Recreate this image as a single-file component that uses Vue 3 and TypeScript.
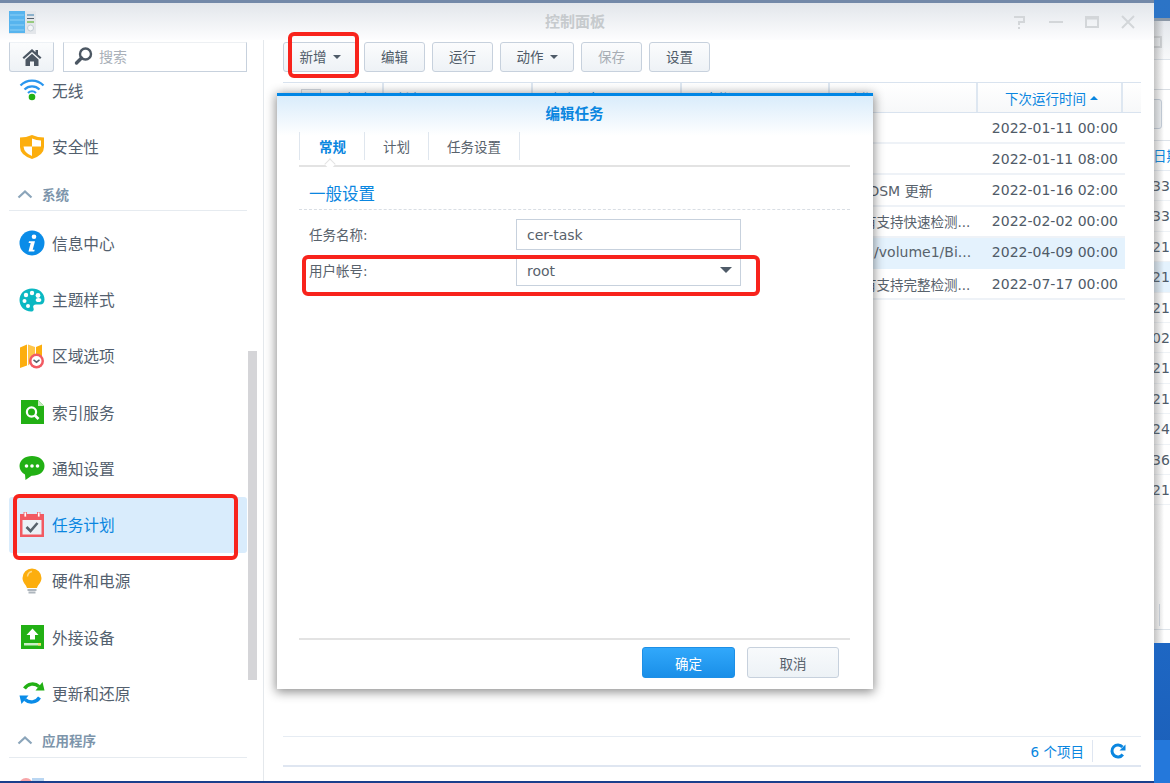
<script setup lang="ts">
interface NavItem { label: string; icon: string; active?: boolean; clipped?: boolean }
interface NavGroup { title?: string; items: NavItem[] }
const groups: NavGroup[] = [
  {
    items: [
      { label: '无线', icon: 'wifi', clipped: true },
      { label: '安全性', icon: 'shield' },
    ],
  },
  {
    title: '系统',
    items: [
      { label: '信息中心', icon: 'info' },
      { label: '主题样式', icon: 'palette' },
      { label: '区域选项', icon: 'region' },
      { label: '索引服务', icon: 'index' },
      { label: '通知设置', icon: 'chat' },
      { label: '任务计划', icon: 'task', active: true },
      { label: '硬件和电源', icon: 'bulb' },
      { label: '外接设备', icon: 'usb' },
      { label: '更新和还原', icon: 'update' },
    ],
  },
  {
    title: '应用程序',
    items: [{ label: '', icon: 'term' }],
  },
]
const tools = [
  { label: '新增', caret: true },
  { label: '编辑' },
  { label: '运行' },
  { label: '动作', caret: true },
  { label: '保存', disabled: true },
  { label: '设置' },
]
const cols = [
  { label: '已启动', w: 101, pad: 18, cb: true },
  { label: '任务', w: 149, pad: 12 },
  { label: '上次运行', w: 149, pad: 16 },
  { label: '用户帐号', w: 148, pad: 9 },
  { label: '动作', w: 148, pad: 16 },
]
const rows = [
  { action: '', next: '2022-01-11 00:00' },
  { action: '', next: '2022-01-11 08:00' },
  { action: '检查 DSM 更新', next: '2022-01-16 02:00' },
  { action: '对所有支持快速检测...', next: '2022-02-02 00:00', tight: true },
  { action: 'bash /volume1/Bi...', next: '2022-04-09 00:00', selected: true },
  { action: '对所有支持完整检测...', next: '2022-07-17 00:00', tight: true },
]
const backRows = ['33', '33', '21', '21', '21', '02', '21', '21', '24', '36', '21']
</script>

<template>
  <div class="desktop">
    <div class="swirl"></div>

    <div class="backwin">
      <div class="back-title"><span class="back-max"></span></div>
      <div class="back-strip"></div>
      <div class="back-tool"><span class="back-btn">.</span></div>
      <div class="back-head">日期</div>
      <div v-for="(r, i) in backRows" :key="i" class="back-row" :class="{ sel: i === 3 }">{{ r }}</div>
      <div class="back-fill"><span class="back-tick"></span></div>
      <div class="back-foot"></div>
    </div>

    <div class="win">
      <header class="titlebar">
        <svg class="appicon" width="28" height="25" viewBox="0 0 28 25">
          <rect x="0" y="0" width="27" height="23" fill="#e3e6ea" />
          <rect x="0" y="0" width="16" height="22" fill="#57b4ee" />
          <path d="M1 4h14M1 9h14M1 14h14M1 19h14" stroke="#8ed0f6" stroke-width="1" />
          <path d="M18 4h7" stroke="#6f9fc0" stroke-width="1.5" />
          <path d="M18 7.500h7" stroke="#54606c" stroke-width="1" />
          <path d="M18 11h7" stroke="#7cc05a" stroke-width="1.5" />
          <circle cx="21.500" cy="17" r="3" fill="#f4f6f8" stroke="#c2ccd4" />
        </svg>
        <span class="wintitle">控制面板</span>
        <div class="winctl">
          <svg width="16" height="16" viewBox="0 0 16 16" fill="none" stroke="#d3d6d9" stroke-width="2"><path d="M2 3h10v5H7v3" /><path d="M7 13v2" /></svg>
          <svg width="16" height="16" viewBox="0 0 16 16" fill="none" stroke="#d3d6d9" stroke-width="2"><path d="M1 8h14" /></svg>
          <svg width="16" height="16" viewBox="0 0 16 16" fill="none" stroke="#d3d6d9" stroke-width="2"><rect x="2" y="3" width="12" height="10" /><path d="M2 4.500h12" /></svg>
          <svg width="16" height="16" viewBox="0 0 16 16" fill="none" stroke="#d3d6d9" stroke-width="2"><path d="M2 2l12 12M14 2L2 14" /></svg>
        </div>
      </header>

      <div class="body">
        <aside class="sidebar">
          <div class="searchrow">
            <button class="homebtn">
              <svg width="20" height="18" viewBox="0 0 20 18"><path d="M10 1L0.500 9.500 2 11l8-7 8 7 1.500-1.500L16 6.500V2h-2.500v2.300z" fill="#4c5763" /><path d="M3.500 11.500L10 5.800l6.500 5.700V18h-4.500v-4.500H8V18H3.500z" fill="#4c5763" /></svg>
            </button>
            <div class="search">
              <svg width="20" height="20" viewBox="0 0 20 20" fill="none"><circle cx="11.500" cy="8" r="5.500" stroke="#4c5763" stroke-width="2.400" /><path d="M7.500 12L2.500 17" stroke="#4c5763" stroke-width="3.400" stroke-linecap="round" /></svg>
              <span>搜索</span>
            </div>
          </div>

          <div class="nav">
            <template v-for="group in groups" :key="group.title ?? 'top'">
              <div v-if="group.title" class="navhead">
                <svg width="16" height="10" viewBox="0 0 16 10" fill="none"><path d="M1.500 8.500L8 2.500l6.500 6" stroke="#8ba5ba" stroke-width="2.200" /></svg>
                <span>{{ group.title }}</span>
              </div>
              <div v-for="it in group.items" :key="it.icon" class="navitem" :class="{ active: it.active, clipped: it.clipped }">
                <svg class="navicon" width="26" height="26" viewBox="0 0 26 26">
                  <g v-if="it.icon === 'wifi'" fill="none">
                    <path d="M1.500 8.500a16 16 0 0 1 23 0" stroke="#2a96ee" stroke-width="2.200" />
                    <path d="M5.500 12.500a10.500 10.500 0 0 1 15 0" stroke="#2a96ee" stroke-width="2.200" />
                    <path d="M9 16a5.500 5.500 0 0 1 8 0" stroke="#2a96ee" stroke-width="2" />
                    <circle cx="13" cy="20" r="3.300" fill="#22b014" />
                  </g>
                  <g v-else-if="it.icon === 'shield'">
                    <path d="M1 3.500Q7 3.500 13 1q6 2.500 12 2.500V13q0 8-12 12Q1 21 1 13z" fill="#fcae0e" />
                    <path d="M13 4.500q4.500 1.800 9 2v6H13z" fill="#fff" />
                    <path d="M13 12.500H4.500q.6 6.500 8.500 9.500z" fill="#fff" />
                  </g>
                  <g v-else-if="it.icon === 'info'">
                    <circle cx="13" cy="13" r="12.500" fill="#0a8ce8" />
                    <circle cx="15" cy="6.800" r="2.300" fill="#fff" />
                    <path d="M10 11.300h6l-2.300 8.400h2l-.5 1.700H9.500l2.200-8.400H9.600z" fill="#fff" />
                  </g>
                  <g v-else-if="it.icon === 'palette'">
                    <path d="M13 1.500C5.800 1.500 0.500 6.500 0.500 13S5.500 24.500 12 24.500c3 0 3-2 2.400-3.500-.8-2 .4-3.500 2.600-3.500h4c3 0 4.500-2 4.500-5C25.500 6 20 1.500 13 1.500z" fill="#0bb8c2" />
                    <circle cx="7" cy="8" r="2.200" fill="#fff" /><circle cx="13" cy="6" r="2.200" fill="#fff" /><circle cx="19" cy="8.500" r="2.400" fill="#fff" /><circle cx="5.500" cy="14" r="2" fill="#fff" /><circle cx="9" cy="19" r="2" fill="#fff" /><ellipse cx="19.500" cy="13" rx="2.800" ry="2" fill="#fff" />
                  </g>
                  <g v-else-if="it.icon === 'region'">
                    <path d="M1 4.500l7-3v21l-7 2.500z" fill="#fcae0e" />
                    <path d="M9 1.500l7 2.500v12l-7 6.500z" fill="#ffc64a" />
                    <path d="M17 4l6-2.500V13h-6z" fill="#fcae0e" />
                    <circle cx="17.500" cy="18" r="7.500" fill="#f25a62" />
                    <circle cx="17.500" cy="18" r="5" fill="#fff" />
                    <path d="M14.500 16.800l3 2.400 3-2.400" fill="none" stroke="#58626c" stroke-width="1.500" />
                  </g>
                  <g v-else-if="it.icon === 'index'">
                    <path d="M2 1h17l6 6v18H2z" fill="#22b014" />
                    <path d="M19 1l6 6h-6z" fill="#c5ecbd" />
                    <circle cx="12.500" cy="13" r="4.600" fill="none" stroke="#fff" stroke-width="2.200" />
                    <path d="M16 16.500l3.500 3.500" stroke="#fff" stroke-width="2.600" />
                  </g>
                  <g v-else-if="it.icon === 'chat'">
                    <path d="M13 1C6 1 .5 5 .5 11c0 3.700 2.200 6.800 5.500 8.500L6.500 25l6-4.200h.5C20 20.800 25.500 17 25.500 11S20 1 13 1z" fill="#22b014" />
                    <circle cx="7.500" cy="11" r="1.800" fill="#fff" /><circle cx="13" cy="11" r="1.800" fill="#fff" /><circle cx="18.500" cy="11" r="1.800" fill="#fff" />
                  </g>
                  <g v-else-if="it.icon === 'task'">
                    <rect x="1" y="2" width="24" height="23" fill="#f25a62" />
                    <rect x="3.500" y="8" width="19" height="14.500" fill="#eaf1f7" />
                    <rect x="5" y="0" width="2.500" height="5" fill="#fff" stroke="#f25a62" stroke-width=".8" />
                    <rect x="18.500" y="0" width="2.500" height="5" fill="#fff" stroke="#f25a62" stroke-width=".8" />
                    <path d="M7.500 15l4 4 7-8" fill="none" stroke="#58626c" stroke-width="2.600" />
                  </g>
                  <g v-else-if="it.icon === 'bulb'">
                    <path d="M13 0.500a9.500 9.500 0 0 0-9.500 9.500c0 4.500 3.500 6.500 4.500 10h10c1-3.500 4.500-5.500 4.500-10A9.500 9.500 0 0 0 13 .5z" fill="#fcae0e" />
                    <path d="M8.500 8.500Q9 4 13 3.500" fill="none" stroke="#ffd985" stroke-width="1.400" />
                    <rect x="8.500" y="21" width="9" height="2" fill="#aeb6bd" /><rect x="9.500" y="23.500" width="7" height="2" fill="#aeb6bd" />
                  </g>
                  <g v-else-if="it.icon === 'usb'">
                    <rect x="2" y="1" width="23" height="24" fill="#22b014" />
                    <path d="M13.500 4.500l6 6.500h-3.500v4.500h-5V11H7.500z" fill="#fff" />
                    <rect x="5" y="19" width="17" height="2.500" fill="#cdeec7" />
                    <rect x="19" y="19" width="3" height="2.500" fill="#f7e26a" />
                  </g>
                  <g v-else-if="it.icon === 'update'" fill="none" stroke-width="3.400">
                    <path d="M5.500 8.500A9.500 9.500 0 0 1 20 6.500" stroke="#22b014" />
                    <path d="M16.500 10.500h9l-2-8.500z" fill="#22b014" />
                    <path d="M20.500 17.500A9.500 9.500 0 0 1 6 19.500" stroke="#0a8ce8" />
                    <path d="M9.500 15.500h-9l2 8.500z" fill="#0a8ce8" />
                  </g>
                  <g v-else-if="it.icon === 'term'">
                    <circle cx="7" cy="8" r="7" fill="#f7a5a8" />
                    <rect x="13" y="1" width="12" height="20" fill="#b9d6f2" />
                  </g>
                </svg>
                <span v-if="it.label">{{ it.label }}</span>
              </div>
            </template>
          </div>
          <div class="scrollthumb"></div>
        </aside>

        <main class="content">
          <div class="toolbar">
            <button v-for="t in tools" :key="t.label" class="tbtn" :class="{ disabled: t.disabled, wide: t.caret }">
              {{ t.label }}<i v-if="t.caret" class="caret"></i>
            </button>
          </div>

          <div class="thead">
            <div v-for="c in cols" :key="c.label" class="th" :style="{ width: c.w + 'px', paddingLeft: c.pad + 'px' }">
              <span v-if="c.cb" class="cb"></span>{{ c.label }}
            </div>
            <div class="th next">下次运行时间<i class="caretup"></i></div>
          </div>
          <div class="tbody">
            <div v-for="r in rows" :key="r.next" class="tr" :class="{ sel: r.selected }">
              <span class="action" :class="{ tight: r.tight }">{{ r.action }}</span>
              <span class="when">{{ r.next }}</span>
            </div>
          </div>

          <div class="statusbar">
            <span class="count">6 个项目</span>
            <span class="vsep"></span>
            <svg width="16" height="16" viewBox="0 0 16 16" fill="none"><path d="M12.800 11.500A6 6 0 1 1 12.500 4" stroke="#0a86e0" stroke-width="3" /><path d="M15.500 1.500v6h-6z" fill="#0a86e0" /></svg>
          </div>
        </main>
      </div>
    </div>

    <section class="dialog">
      <h2 class="dlgtitle">编辑任务</h2>
      <div class="tabs">
        <span class="tab on">常规</span>
        <span class="tab">计划</span>
        <span class="tab">任务设置</span>
      </div>
      <div class="dlgbody">
        <h3 class="legend">一般设置</h3>
        <div class="field">
          <label>任务名称:</label>
          <div class="input">cer-task</div>
        </div>
        <div class="field second">
          <label>用户帐号:</label>
          <div class="input select">root<i class="selcaret"></i></div>
        </div>
      </div>
      <footer class="dlgfoot">
        <button class="dbtn primary">确定</button>
        <button class="dbtn cancel">取消</button>
      </footer>
    </section>

    <div class="mark m1"></div>
    <div class="mark m2"></div>
    <div class="mark m3"></div>
  </div>
</template>

<style scoped>
.desktop {
  position: relative;
  width: 1170px;
  height: 783px;
  overflow: hidden;
  background: linear-gradient(180deg, #2c74c6 0, #1f6ccb 70%, #1c5fb8 100%);
  font-family: "DejaVu Sans", "Noto Sans CJK SC", sans-serif;
  color: #4f5b68;
  font-size: 14px;
}
.desktop::after {
  content: "";
  position: absolute;
  left: 0;
  bottom: 0;
  height: 2px;
  width: 1154px;
  background: #1a3f8c;
}
.swirl {
  position: absolute;
  left: 1154px;
  right: 0;
  top: 740px;
  bottom: 0;
  background: #2478db;
}
.backwin {
  position: absolute;
  left: 1154px;
  top: 18px;
  width: 16px;
  height: 625px;
  overflow: hidden;
  background: #fff;
  border-top: 3px solid #8a97a6;
  box-sizing: border-box;
  display: flex;
  flex-direction: column;
}
.backwin::before {
  content: "";
  position: absolute;
  left: 0;
  top: 0;
  bottom: 0;
  width: 10px;
  background: linear-gradient(90deg, rgba(90, 90, 90, .35), rgba(90, 90, 90, 0));
  z-index: 1;
}
.back-title {
  height: 38px;
  flex: none;
  background: linear-gradient(180deg, #e3e7ec, #f8f9fa);
  border-bottom: 1px solid #dde3ea;
  display: flex;
  align-items: flex-end;
}
.back-max {
  width: 6px;
  height: 8px;
  border: 2px solid #d3d6d9;
  border-left: 0;
  margin-bottom: 11px;
}
.back-strip {
  height: 29px;
  flex: none;
  border-bottom: 1px solid #d8dde3;
}
.back-tool {
  height: 50px;
  flex: none;
  border-bottom: 1px solid #dde3ea;
  position: relative;
}
.back-btn {
  position: absolute;
  left: -20px;
  top: 9px;
  width: 28px;
  height: 30px;
  box-sizing: border-box;
  border: 1px solid #c7d1dd;
  border-radius: 3px;
  background: #f3f6f9;
  text-align: right;
  padding-right: 6px;
  line-height: 22px;
  color: #4f5b68;
}
.back-head {
  height: 30px;
  flex: none;
  margin-left: -1px;
  line-height: 31px;
  color: #0a86e0;
  font-size: 13.500px;
  border-bottom: 1px solid #e6ecf3;
  box-sizing: border-box;
  white-space: nowrap;
}
.back-row {
  height: 30.400px;
  flex: none;
  box-sizing: border-box;
  border-bottom: 1px solid #eef2f6;
  line-height: 31px;
  text-indent: -2px;
  white-space: nowrap;
}
.back-row.sel { background: #e4f2fd; }
.back-fill {
  flex: 1;
  position: relative;
}
.back-tick {
  position: absolute;
  left: 5px;
  bottom: 3px;
  width: 1px;
  height: 22px;
  background: #d3dbe5;
}
.back-foot {
  height: 13px;
  flex: none;
  border-top: 1px solid #dde3ea;
}

.win {
  position: absolute;
  left: 0;
  top: 0;
  width: 1154px;
  height: 781px;
  box-sizing: border-box;
  border-top: 3px solid #7389a8;
  background: #fff;
  display: flex;
  flex-direction: column;
}
.titlebar {
  height: 37px;
  flex: none;
  position: relative;
  background: linear-gradient(180deg, #e2e6eb, #fdfdfe);
  display: flex;
  align-items: center;
  justify-content: center;
}
.appicon {
  position: absolute;
  left: 9px;
  top: 8px;
}
.wintitle {
  font-weight: 700;
  font-size: 15px;
  color: #c6cacd;
  margin: 0 4px 3px 0;
}
.winctl {
  position: absolute;
  left: 1012px;
  top: 11px;
  display: flex;
  gap: 20px;
}
.body {
  flex: 1;
  min-height: 0;
  display: flex;
}
.sidebar {
  position: relative;
  width: 264px;
  flex: none;
  box-sizing: border-box;
  border-right: 1px solid #e4e8ec;
  overflow: hidden;
}
.searchrow {
  display: flex;
  gap: 9px;
  padding: 2px 0 0 9px;
  height: 32px;
  box-sizing: border-box;
}
.homebtn {
  width: 45px;
  height: 30px;
  padding: 0;
  border: 1px solid #c7d1dd;
  border-top-color: transparent;
  border-radius: 0 0 3px 3px;
  background: linear-gradient(180deg, #fbfcfd, #eef2f6);
  display: flex;
  align-items: center;
  justify-content: center;
}
.search {
  width: 184px;
  height: 30px;
  box-sizing: border-box;
  border: 1px solid #c7d1dd;
  border-top-color: #edf0f3;
  display: flex;
  align-items: center;
  gap: 5px;
  padding: 0 0 2px 10px;
  color: #a9b0b8;
  font-size: 14px;
}
.nav {
  width: 238px;
  margin-left: 9px;
  display: flex;
  flex-direction: column;
}
.navitem {
  height: 56.250px;
  flex: none;
  display: flex;
  align-items: center;
  border-radius: 3px;
  font-size: 15.700px;
  color: #53606e;
  padding-left: 10px;
}
.navitem.clipped {
  height: 46.500px;
  box-sizing: border-box;
  padding-bottom: 10.500px;
}
.navicon {
  flex: none;
  width: 26px;
  height: 26px;
  margin-right: 7px;
}
.navitem.active {
  background: #d9ecfc;
  color: #0a86e0;
}
.navhead {
  height: 36.500px;
  flex: none;
  box-sizing: border-box;
  border-bottom: 1px solid #e6ebf0;
  display: flex;
  align-items: center;
  gap: 9px;
  padding: 2px 0 0 8px;
  font-size: 13.500px;
  font-weight: 700;
  color: #7d95ab;
  margin-bottom: 4px;
}
.scrollthumb {
  position: absolute;
  left: 248px;
  top: 311px;
  width: 9px;
  height: 329px;
  background: #d5d5d8;
}
.content {
  flex: 1;
  min-width: 0;
  position: relative;
  display: flex;
  flex-direction: column;
  padding: 2px 13px 0 19px;
}
.toolbar {
  display: flex;
  gap: 7px;
  height: 30px;
  flex: none;
}
.tbtn {
  width: 61px;
  height: 30px;
  padding: 0 0 2px;
  border: 1px solid #c7d1dd;
  border-radius: 3px;
  background: linear-gradient(180deg, #fbfcfd, #eef2f6);
  color: #4f5b68;
  font: 13.500px "DejaVu Sans", "Noto Sans CJK SC", sans-serif;
  display: flex;
  align-items: center;
  justify-content: center;
}
.tbtn.wide { width: 74px; }
.tbtn.disabled { color: #a7adb4; }
.caret {
  width: 0;
  height: 0;
  margin: 2px 0 0 6px;
  border: 4px solid transparent;
  border-top-color: #4f5b68;
  border-bottom: 0;
}
.thead {
  margin-top: 10px;
  height: 31px;
  flex: none;
  box-sizing: border-box;
  border-top: 1px solid #d9e3ef;
  border-bottom: 1px solid #d9e3ef;
  display: flex;
  background: linear-gradient(180deg, #fff, #f7f8f9);
  color: #0a86e0;
  font-size: 13.500px;
}
.th {
  box-sizing: border-box;
  border-right: 2px solid #dee7f1;
  display: flex;
  align-items: center;
  white-space: nowrap;
  flex: none;
  overflow: hidden;
}
.th.next {
  width: 145px;
  padding-left: 27px;
}
.cb {
  width: 20px;
  height: 18px;
  box-sizing: border-box;
  border: 1px solid #cfd5db;
  background: #f6f6f6;
  margin-right: 8px;
}
.caretup {
  width: 0;
  height: 0;
  margin-left: 4px;
  border: 4px solid transparent;
  border-bottom-color: #0a86e0;
  border-top: 0;
}
.tbody {
  width: 842px;
  flex: 1;
}
.tr {
  height: 31.200px;
  box-sizing: border-box;
  border-bottom: 2px solid #eef2f7;
  display: flex;
  align-items: center;
  justify-content: space-between;
  padding: 0 7px 0 553px;
  white-space: nowrap;
}
.tr.sel { background: #e4f2fd; border-bottom-color: #e4f2fd; }
.action {
  font-size: 14px;
  color: #58626c;
}
.action.tight { font-size: 13.500px; }
.when { font-size: 14px; color: #4f5b68; }
.statusbar {
  height: 31px;
  flex: none;
  box-sizing: border-box;
  margin-bottom: 14px;
  border-top: 1px solid #e6ecf3;
  border-bottom: 2px solid #dfe6f1;
  display: flex;
  align-items: center;
  justify-content: flex-end;
  padding-right: 15px;
  color: #0a86e0;
  font-size: 13.500px;
}
.vsep {
  width: 1px;
  height: 22px;
  background: #dfe6f1;
  margin: 0 17px 0 8px;
}

.dialog {
  position: absolute;
  left: 277px;
  top: 93px;
  width: 596px;
  height: 596px;
  box-sizing: border-box;
  border-top: 3px solid #0086e5;
  background: linear-gradient(180deg, #d9ecfb 0, #fff 40px);
  box-shadow: 0 2px 10px 1px rgba(0, 0, 0, .45);
  display: flex;
  flex-direction: column;
  padding: 0 23px 0 22px;
}
.dlgtitle {
  margin: 0;
  height: 36px;
  flex: none;
  font-size: 14.500px;
  font-weight: 700;
  color: #0a86e0;
  text-align: center;
  line-height: 36px;
}
.tabs {
  height: 35px;
  flex: none;
  box-sizing: border-box;
  border-bottom: 2px solid #e3e3e3;
  display: flex;
  position: relative;
  padding-bottom: 5px;
}
.tabs::after {
  content: "";
  position: absolute;
  left: 27px;
  bottom: -3px;
  width: 7px;
  height: 7px;
  background: #fff;
  border-left: 1px solid #e3e3e3;
  border-top: 1px solid #e3e3e3;
  transform: rotate(45deg);
}
.tab {
  padding: 0 18px;
  font-size: 13.500px;
  line-height: 30px;
  height: 28px;
  border-right: 1px solid #dfe6ee;
  color: #58626c;
}
.tab:first-child { border-left: 1px solid #dfe6ee; padding: 0 18px 0 19px; }
.tab.on { color: #0a86e0; font-weight: 700; }
.dlgbody {
  flex: 1;
  min-height: 0;
}
.legend {
  margin: 0 0 9px;
  height: 43px;
  box-sizing: border-box;
  border-bottom: 1px dashed #d9dee4;
  padding: 16px 0 0 10px;
  font-size: 16.500px;
  font-weight: 400;
  line-height: 24px;
  color: #0a86e0;
}
.field {
  display: flex;
  align-items: center;
  height: 31px;
  padding-left: 10px;
}
.field.second {
  margin-top: 6px;
  height: 30px;
}
.field label {
  width: 207px;
  font-size: 13.500px;
  color: #58626c;
  padding-bottom: 2px;
}
.field.second label { padding-bottom: 3px; }
.input {
  width: 225px;
  height: 31px;
  box-sizing: border-box;
  border: 1px solid #c7d1dd;
  padding-left: 10px;
  line-height: 30px;
  font-size: 14px;
  color: #58626c;
  position: relative;
}
.field.second .input {
  height: 30px;
  line-height: 28px;
}
.selcaret {
  position: absolute;
  right: 8px;
  top: 10px;
  width: 0;
  height: 0;
  border-left: 6px solid transparent;
  border-right: 6px solid transparent;
  border-top: 6px solid #4f5b68;
}
.dlgfoot {
  height: 42px;
  flex: none;
  border-top: 2px solid #e3e3e3;
  display: flex;
  justify-content: flex-end;
  gap: 12px;
  padding: 7px 11px 0 0;
}
.dbtn {
  width: 93px;
  height: 31px;
  padding: 0;
  border: 1px solid #c7d1dd;
  border-radius: 3px;
  background: linear-gradient(180deg, #f8fafc, #edf2f6);
  color: #58626c;
  font: 13.500px "DejaVu Sans", "Noto Sans CJK SC", sans-serif;
}
.dbtn.cancel { width: 92px; }
.dbtn.primary {
  border-color: #1d8fe6;
  background: linear-gradient(180deg, #31a8fb, #1a8fe8);
  color: #fff;
}

.mark {
  position: absolute;
  box-sizing: border-box;
  border: 4px solid #f8231c;
  border-radius: 6px;
  pointer-events: none;
}
.m1 { left: 288px; top: 32px; width: 71px; height: 46px; }
.m2 { left: 302px; top: 255px; width: 458px; height: 41px; }
.m3 { left: 13px; top: 494px; width: 225px; height: 66px; }
</style>
